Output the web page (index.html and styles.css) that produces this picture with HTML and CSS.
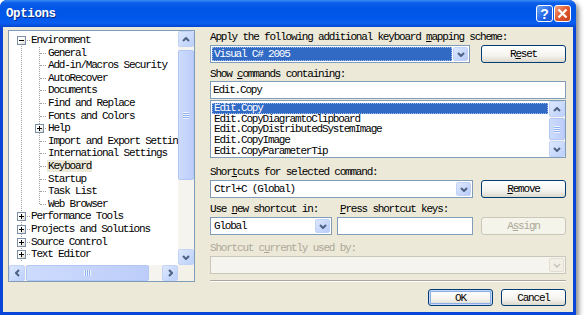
FILE: index.html
```html
<!DOCTYPE html>
<html lang="en">
<head>
    <meta charset="UTF-8">
    <title>Options</title>
    <link rel="stylesheet" href="styles.css">
</head>
<body>
    <div class="window">
        <div class="titlebar">
            <span class="title">Options</span>
            <div class="caption-btns">
                <span class="cap-btn help">?</span>
                <span class="cap-btn close">
                    <svg width="11" height="11" viewBox="0 0 11 11"><path d="M1.5 1.5l8 8M9.5 1.5l-8 8" stroke="#fff" stroke-width="2.2" fill="none"/></svg>
                </span>
            </div>
        </div>

        <div class="client">
            <div class="main">
                <div class="tree-box">
                    <div class="tree-view">
                        <div class="tree">
                            <div class="row root"><span class="exp"></span>Environment</div>
                            <div class="group">
                                <div class="row child">General</div>
                                <div class="row child">Add-in/Macros Security</div>
                                <div class="row child">AutoRecover</div>
                                <div class="row child">Documents</div>
                                <div class="row child">Find and Replace</div>
                                <div class="row child">Fonts and Colors</div>
                                <div class="row child"><span class="exp plus"></span>Help</div>
                                <div class="row child">Import and Export Settings</div>
                                <div class="row child">International Settings</div>
                                <div class="row child"><span class="picked">Keyboard</span></div>
                                <div class="row child">Startup</div>
                                <div class="row child">Task List</div>
                                <div class="row child">Web Browser</div>
                            </div>
                            <div class="row root"><span class="exp plus"></span>Performance Tools</div>
                            <div class="row root"><span class="exp plus"></span>Projects and Solutions</div>
                            <div class="row root"><span class="exp plus"></span>Source Control</div>
                            <div class="row root"><span class="exp plus"></span>Text Editor</div>
                        </div>
                    </div>
                    <div class="vscroll">
                        <span class="sb-btn"><svg width="8" height="5" viewBox="0 0 8 5"><path d="M1 4l3-3 3 3" fill="none" stroke="#4d6185" stroke-width="2"/></svg></span>
                        <div class="sb-track"><span class="thumb tree-vthumb"><i class="grip"></i></span></div>
                        <span class="sb-btn"><svg width="8" height="5" viewBox="0 0 8 5"><path d="M1 1l3 3 3-3" fill="none" stroke="#4d6185" stroke-width="2"/></svg></span>
                    </div>
                    <div class="hscroll">
                        <span class="sb-btn"><svg width="5" height="8" viewBox="0 0 5 8"><path d="M4 1L1 4l3 3" fill="none" stroke="#4d6185" stroke-width="2"/></svg></span>
                        <div class="sb-track"><span class="thumb tree-hthumb"><i class="grip"></i></span></div>
                        <span class="sb-btn"><svg width="5" height="8" viewBox="0 0 5 8"><path d="M1 1l3 3-3 3" fill="none" stroke="#4d6185" stroke-width="2"/></svg></span>
                    </div>
                    <div class="corner"></div>
                </div>

                <div class="settings">
                    <div class="lbl first">Apply the following additional keyboard <u>m</u>apping scheme:</div>
                    <div class="line scheme-row">
                        <div class="combo">
                            <span class="value sel">Visual C# 2005</span>
                            <span class="drop"><svg width="8" height="5" viewBox="0 0 8 5"><path d="M1 1l3 3 3-3" fill="none" stroke="#4d6185" stroke-width="2"/></svg></span>
                        </div>
                        <span class="btn">R<u>e</u>set</span>
                    </div>

                    <div class="lbl gap5">Show <u>c</u>ommands containing:</div>
                    <div class="textbox">Edit.Copy</div>
                    <div class="listbox">
                        <div class="items">
                            <div class="sel">Edit.Copy</div>
                            <div>Edit.CopyDiagramtoClipboard</div>
                            <div>Edit.CopyDistributedSystemImage</div>
                            <div>Edit.CopyImage</div>
                            <div>Edit.CopyParameterTip</div>
                        </div>
                        <div class="vscroll small">
                            <span class="sb-btn"><svg width="8" height="5" viewBox="0 0 8 5"><path d="M1 4l3-3 3 3" fill="none" stroke="#4d6185" stroke-width="2"/></svg></span>
                            <div class="sb-track"><span class="thumb list-thumb"><i class="grip"></i></span></div>
                            <span class="sb-btn"><svg width="8" height="5" viewBox="0 0 8 5"><path d="M1 1l3 3 3-3" fill="none" stroke="#4d6185" stroke-width="2"/></svg></span>
                        </div>
                    </div>

                    <div class="lbl gap8">Shor<u>t</u>cuts for selected command:</div>
                    <div class="line shortcut-row">
                        <div class="combo">
                            <span class="value">Ctrl+C (Global)</span>
                            <span class="drop"><svg width="8" height="5" viewBox="0 0 8 5"><path d="M1 1l3 3 3-3" fill="none" stroke="#4d6185" stroke-width="2"/></svg></span>
                        </div>
                        <span class="btn"><u>R</u>emove</span>
                    </div>

                    <div class="new-grid lbl gap5">
                        <span>Use <u>n</u>ew shortcut in:</span>
                        <span><u>P</u>ress shortcut keys:</span>
                    </div>
                    <div class="new-grid line">
                        <div class="combo">
                            <span class="value">Global</span>
                            <span class="drop"><svg width="8" height="5" viewBox="0 0 8 5"><path d="M1 1l3 3 3-3" fill="none" stroke="#4d6185" stroke-width="2"/></svg></span>
                        </div>
                        <div class="textbox inline"></div>
                        <span class="btn disabled">A<u>s</u>sign</span>
                    </div>

                    <div class="lbl gap7 muted">Shortcut c<u>u</u>rrently used by:</div>
                    <div class="line">
                        <div class="combo off">
                            <span class="value"></span>
                            <span class="drop"><svg width="8" height="5" viewBox="0 0 8 5"><path d="M1 1l3 3 3-3" fill="none" stroke="#c9c7ba" stroke-width="1.6"/></svg></span>
                        </div>
                    </div>
                    <div class="separator"></div>
                </div>
            </div>

            <div class="footer">
                <span class="btn default">OK</span>
                <span class="btn">Cancel</span>
            </div>
        </div>
    </div>
</body>
</html>
```

FILE: styles.css
```css
* {
    box-sizing: border-box;
}
body {
    margin: 0;
    background: #fff;
    font-family: "Liberation Mono", "DejaVu Sans Mono", monospace;
    font-size: 11px;
    letter-spacing: -1.2px;
    color: #000;
}
u {
    text-decoration: underline;
    text-underline-offset: 1px;
}

/* window frame */
.window {
    width: 576px;
    height: 315px;
    display: flex;
    flex-direction: column;
    background: #0846d8;
    border-radius: 7px 7px 0 0;
    box-shadow: 3px 3px 5px rgba(0, 0, 0, 0.45);
    overflow: hidden;
}
.titlebar {
    height: 27px;
    flex: none;
    display: flex;
    align-items: center;
    justify-content: space-between;
    padding: 0 5px 0 6px;
    background: linear-gradient(180deg, #3b8cf5 0, #0a5ee9 3px, #0056e6 9px, #0058ea 18px, #0a5ef0 23px, #0046d0 27px);
}
.title {
    color: #fff;
    font-weight: bold;
    font-size: 12.5px;
    letter-spacing: -0.4px;
    text-shadow: 1px 1px 0 #0b2a8c;
}
.caption-btns {
    display: flex;
    gap: 1px;
}
.cap-btn {
    width: 17px;
    height: 17px;
    border: 1px solid #fff;
    border-radius: 3px;
    display: flex;
    align-items: center;
    justify-content: center;
}
.help {
    background: linear-gradient(135deg, #6fa6f9, #2366e8 55%, #1a55d8);
    color: #fff;
    font-family: "Liberation Sans", sans-serif;
    font-weight: bold;
    font-size: 14px;
    letter-spacing: 0;
}
.close {
    background: linear-gradient(135deg, #f3a27f, #e0582f 50%, #c8421c);
}

.client {
    flex: 1;
    margin: 0 3px 3px;
    background: #ece9d8;
    padding: 3px 7px 0 5px;
    display: flex;
    flex-direction: column;
}
.main {
    display: grid;
    grid-template-columns: 187px 356px;
    column-gap: 15px;
    height: 249px;
}

/* tree */
.tree-box {
    border: 1px solid #7f9db9;
    background: #fff;
    display: grid;
    grid-template-columns: 1fr 16px;
    grid-template-rows: 1fr 16px;
}
.tree-view {
    overflow: hidden;
    padding-top: 3px;
}
.tree {
    position: relative;
}
.tree::before {
    content: "";
    position: absolute;
    left: 12px;
    top: 6px;
    bottom: 0;
    border-left: 1px dotted #a0a0a0;
}
.group {
    position: relative;
}
.group::before {
    content: "";
    position: absolute;
    left: 30px;
    top: 0;
    bottom: 6px;
    border-left: 1px dotted #a0a0a0;
}
.row {
    position: relative;
    height: 12.6px;
    line-height: 12.6px;
    white-space: nowrap;
}
.row::before {
    content: "";
    position: absolute;
    top: 6px;
    border-top: 1px dotted #a0a0a0;
}
.root {
    padding-left: 22px;
}
.root::before {
    left: 13px;
    width: 8px;
}
.child {
    padding-left: 39px;
}
.child::before {
    left: 31px;
    width: 6px;
}
.exp {
    position: absolute;
    top: 2px;
    left: 8px;
    width: 9px;
    height: 9px;
    border: 1px solid #7b8ea8;
    background: linear-gradient(135deg, #fff 40%, #dcd8cc);
    z-index: 1;
}
.child .exp {
    left: 26px;
}
.exp::before {
    content: "";
    position: absolute;
    left: 1px;
    top: 3px;
    width: 5px;
    height: 1px;
    background: #000;
}
.exp.plus::after {
    content: "";
    position: absolute;
    left: 3px;
    top: 1px;
    width: 1px;
    height: 5px;
    background: #000;
}
.picked {
    background: #ece9d8;
    padding: 0 1px;
    margin-left: -1px;
}

/* scrollbars */
.vscroll {
    display: flex;
    flex-direction: column;
    background: #f5f4ef;
}
.hscroll {
    display: flex;
    background: #f5f4ef;
}
.corner {
    background: #f3f1e8;
}
.sb-btn {
    flex: none;
    width: 16px;
    height: 16px;
    display: flex;
    align-items: center;
    justify-content: center;
    background: linear-gradient(135deg, #dde8fe, #bcd0fa);
    border: 1px solid #c3d3f7;
    border-radius: 2px;
}
.sb-track {
    flex: 1;
    display: flex;
}
.vscroll .sb-track {
    flex-direction: column;
}
.thumb {
    display: flex;
    align-items: center;
    justify-content: center;
    background: linear-gradient(90deg, #cddbfd, #bccdf9);
    border: 1px solid #b3c7f4;
    border-radius: 2px;
}
.tree-vthumb {
    margin-top: 3px;
    height: 130px;
}
.tree-hthumb {
    margin-left: 1px;
    width: 123px;
}
.list-thumb {
    margin: 1px 0;
    height: 22px;
}
.grip {
    width: 6px;
    height: 7px;
    background: repeating-linear-gradient(180deg, #eef3fe 0 1px, #8fb0f3 1px 2px);
}
.hscroll .grip {
    width: 7px;
    height: 6px;
    background: repeating-linear-gradient(90deg, #eef3fe 0 1px, #8fb0f3 1px 2px);
}

/* right side */
.settings {
    display: flex;
    flex-direction: column;
}
.lbl {
    height: 12px;
    line-height: 12px;
    white-space: nowrap;
}
.lbl.first {
    margin-top: 1px;
}
.gap5 {
    margin-top: 5px;
}
.gap7 {
    margin-top: 7px;
}
.gap8 {
    margin-top: 8px;
}
.muted {
    color: #aca899;
}
.line {
    margin-top: 2px;
    height: 18px;
    display: flex;
}
.scheme-row {
    gap: 11px;
}
.scheme-row .combo {
    width: 260px;
}
.shortcut-row {
    gap: 8px;
}
.shortcut-row .combo {
    width: 263px;
}
.new-grid {
    display: grid;
    grid-template-columns: 122px 136px 85px;
    column-gap: 5px;
}
.new-grid > :last-child {
    margin-left: 3px;
}
.combo {
    flex: 1;
    height: 18px;
    display: flex;
    border: 1px solid #7f9db9;
    background: #fff;
    padding: 1px;
}
.combo .value {
    flex: 1;
    line-height: 14px;
    padding-left: 2px;
    white-space: nowrap;
}
.combo .value.sel {
    background: #316ac5;
    color: #fff;
    outline: 1px dotted #9db8e8;
    outline-offset: -1px;
    margin-right: 1px;
}
.drop {
    width: 15px;
    display: flex;
    align-items: center;
    justify-content: center;
    background: linear-gradient(135deg, #dde8fe, #b7cbf8);
    border: 1px solid #c3d3f7;
    border-radius: 2px;
}
.combo.off {
    border-color: #c9c7ba;
    background: #f5f4ee;
}
.combo.off .drop {
    background: #f1efe6;
    border-color: #e2dfd2;
}
.textbox {
    margin-top: 1px;
    height: 18px;
    border: 1px solid #7f9db9;
    background: #fff;
    line-height: 16px;
    padding-left: 2px;
}
.textbox.inline {
    margin-top: 0;
}
.listbox {
    margin-top: 1px;
    height: 58px;
    display: flex;
    border: 1px solid #7f9db9;
    background: #fff;
}
.items {
    flex: 1;
    padding: 2px 1px 0 1px;
}
.items div {
    height: 10.7px;
    line-height: 10.7px;
    padding-left: 2px;
    white-space: nowrap;
}
.items .sel {
    background: #316ac5;
    color: #fff;
    outline: 1px dotted #9db8e8;
    outline-offset: -1px;
}
.vscroll.small {
    width: 16px;
}
.separator {
    margin-top: 6px;
    border-top: 1px solid #aca899;
    border-bottom: 1px solid #fff;
}

/* buttons */
.btn {
    width: 85px;
    height: 18px;
    display: flex;
    align-items: center;
    justify-content: center;
    border: 1px solid #003c74;
    border-radius: 3px;
    background: linear-gradient(180deg, #fff 0, #f4f3ee 60%, #dcd8cc 100%);
    white-space: nowrap;
}
.btn.disabled {
    border-color: #c9c7ba;
    background: #f5f4ea;
    color: #aca899;
}
.footer {
    margin-top: 10px;
    display: flex;
    justify-content: flex-end;
    gap: 8px;
}
.footer .btn {
    width: 65px;
    height: 17px;
}
.btn.default {
    box-shadow: inset 0 0 0 1px #c8d8f7, inset 0 0 0 2px #89ade4;
}
```
